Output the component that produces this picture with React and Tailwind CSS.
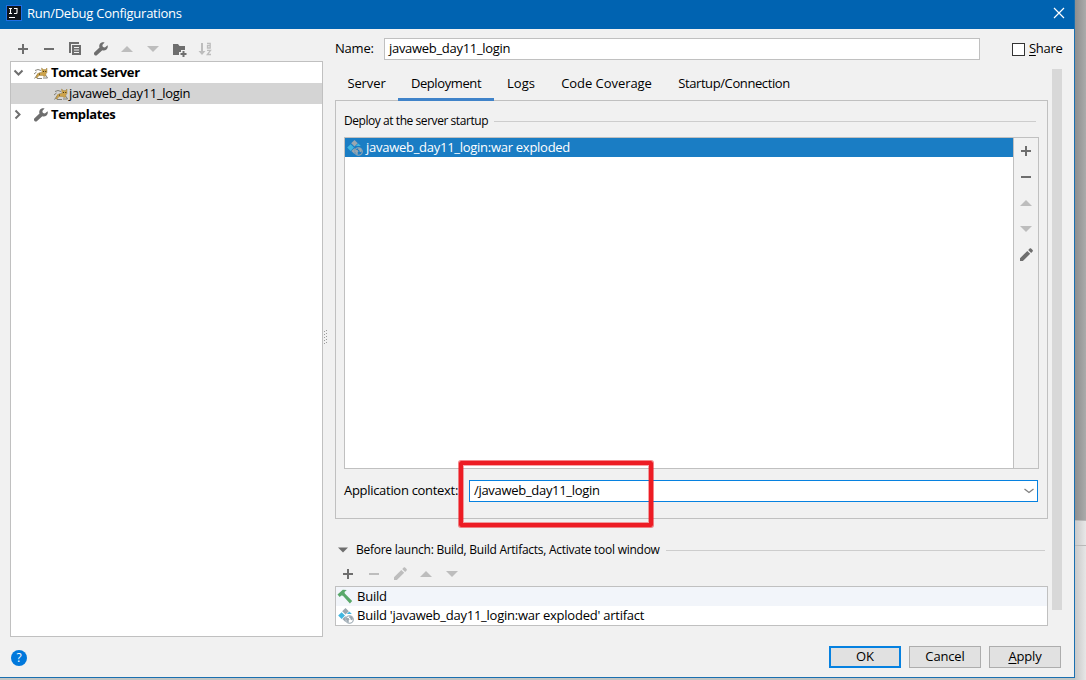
import clsx from 'clsx';

const PlusIcon = () => (
  <svg width="16" height="16" viewBox="0 0 16 16" className="shrink-0">
    <path d="M7 3h2v4h4v2H9v4H7V9H3V7h4z" fill="#6e6e6e" />
  </svg>
);

const MinusIcon = ({ color = '#6e6e6e' }) => (
  <svg width="16" height="16" viewBox="0 0 16 16" className="shrink-0">
    <path d="M3 7h10v2H3z" fill={color} />
  </svg>
);

const UpIcon = () => (
  <svg width="16" height="16" viewBox="0 0 16 16" className="shrink-0">
    <path d="M2 11l6-6 6 6z" fill="#bdbdbd" />
  </svg>
);

const DownIcon = () => (
  <svg width="16" height="16" viewBox="0 0 16 16" className="shrink-0">
    <path d="M2 5l6 6 6-6z" fill="#bdbdbd" />
  </svg>
);

const CopyIcon = () => (
  <svg width="16" height="16" viewBox="0 0 16 16" className="shrink-0">
    <path d="M2 1h10v2H4v9H2z" fill="#6e6e6e" />
    <path fillRule="evenodd" d="M5 4h9v10H5zM7 6v1h5V6zm0 2.500v1h5v-1zm0 2.500v1h5v-1z" fill="#6e6e6e" />
  </svg>
);

const WrenchIcon = () => (
  <svg width="16" height="16" viewBox="0 0 16 16" className="shrink-0">
    <path
      d="M14.600 4.300l-2.700 2.200-2-.5-.6-2 2.300-2.600c-1.900-.6-3.900.1-4.800 1.600-.7 1.200-.7 2.400-.3 3.500L1.500 11.300c-.7.7-.7 1.900 0 2.600.7.7 1.800.7 2.600 0l5.200-4.600c1.400.5 3 .2 4.200-.9 1.200-1.100 1.600-2.700 1.100-4.100z"
      fill="#6e6e6e"
    />
  </svg>
);

const FolderAddIcon = () => (
  <svg width="16" height="16" viewBox="0 0 16 16" className="shrink-0">
    <path d="M2 3h5l1.500 2H14v4h-4v2H8v3H2z" fill="#6e6e6e" />
    <path d="M11.500 10h2v2h2v2h-2v2h-2v-2h-2v-2h2z" fill="#6e6e6e" />
  </svg>
);

const SortIcon = () => (
  <svg width="16" height="16" viewBox="0 0 16 16" className="shrink-0">
    <path d="M4 2h2v8h2.500L5 14 1.500 10H4z" fill="#bdbdbd" />
    <path d="M10 2.500h3.200V7h-2.700V4.700h2.700M10 9.300h3.500L10.300 13.500H14" fill="none" stroke="#bdbdbd" strokeWidth="1.300" />
  </svg>
);

const PencilIcon = ({ color = '#6e6e6e' }) => (
  <svg width="16" height="16" viewBox="0 0 16 16" className="shrink-0">
    <path d="M2 11.200L9.300 3.900l2.900 2.900L4.900 14H2zM10.200 3l1.500-1.500c.4-.4 1-.4 1.400 0l1.500 1.500c.4.400.4 1 0 1.400l-1.500 1.500z" fill={color} />
  </svg>
);

const TomcatIcon = () => (
  <svg width="14" height="14" viewBox="0 0 14 14" className="shrink-0">
    <path d="M1 4.500l3-1 3 1M0 8l2.500-2M.5 12.500l3-4M3 12.500h5M12 9.500l1.500 2.500H9" fill="none" stroke="#77766c" strokeWidth=".9" />
    <path d="M7.500 2l2 1.500h2L13 2v4.500l-1.300 1.500L12 10l-2 .5-1.500-1L5 9.500 3 12H1.800l1.500-4.200L6 6.500h2z" fill="#cda34a" stroke="#8a713b" strokeWidth=".4" />
    <path d="M9 5h1v1H9zm2.200 0h1v1h-1zM5 7.500h.8v1.200H5z" fill="#3c3218" />
  </svg>
);

const ArtifactIcon = ({ selected }) => (
  <svg width="16" height="16" viewBox="0 0 16 16" className="shrink-0">
    <path d="M7.500 0l3.300 3.300-3.300 3.300-3.300-3.300z" fill="#9aa7b0" />
    <path d="M3.600 4.200L7 7.600 3.600 11 .2 7.600z" fill="#40b6e0" />
    <path d="M11.300 3.600l2.500 2.500h-5z" fill="#40b6e0" />
    <path d="M7.500 8.200l1 1L8 13.500l-.5.500-3.200-3z" fill="#9aa7b0" />
    <circle cx="11.500" cy="11.500" r="4.300" fill={selected ? '#1a7dc4' : '#fff'} />
    <circle cx="11.500" cy="11.500" r="3.800" fill="none" stroke="#9aa7b0" strokeWidth="1.100" />
    <path d="M8.300 9.500l2.200.5 1 1.500-1 1.200.6 2.100-1.700-.8-1.500-2.500zM11.500 8l2 .3 1.500 2.500-1 1.400-1.500-.7-.2-1.300-1.300-.8z" fill="#9aa7b0" />
  </svg>
);

const HammerIcon = () => (
  <svg width="16" height="16" viewBox="0 0 16 16" className="shrink-0">
    <path d="M.5 5.500L5.800.8l4 .2-2.300 2 .3 1.600 7.400 7.300-2.300 2.500-7-7.600-1.500-.3-1.700 1.600z" fill="#59a869" />
  </svg>
);

const tabs = [
  { name: 'Server', style: 'w-[63px] tracking-[-0.1px]' },
  { name: 'Deployment', style: 'w-[96px] tracking-[-0.4px]' },
  { name: 'Logs', style: 'w-[54px]' },
  { name: 'Code Coverage', style: 'w-[117px] tracking-[-0.05px]' },
  { name: 'Startup/Connection', style: 'w-[138px] tracking-[-0.4px]' },
];

const Button = ({ children, primary }) => (
  <button
    className={clsx(
      'flex h-[22px] w-[72px] items-center justify-center bg-[#e1e1e1] pb-[2px] leading-none tracking-[-0.15px]',
      primary ? 'border-2 border-[#0681e0]' : 'border border-[#adadad]'
    )}
  >
    {children}
  </button>
);

const TitleBar = () => (
  <header className="flex h-[29px] items-center bg-[#0063b1] pr-[9px] pl-[6px] text-white">
    <svg width="16" height="16" viewBox="0 0 16 16" className="-mt-[3px]">
      <rect x=".5" y=".5" width="15" height="15" fill="#101418" stroke="#1f6fe5" />
      <path d="M3 3.500h3M4.500 3.500v5M3 8.500h3M8 3.500h3v4q0 1-1 1H8M3 12.500h6" fill="none" stroke="#fff" strokeWidth="1.100" />
    </svg>
    <span className="-mt-px ml-[5px] tracking-[-0.26px]">Run/Debug Configurations</span>
    <svg width="12" height="12" viewBox="0 0 12 12" className="-mt-[3px] ml-auto">
      <path d="M1 1l10 10M11 1L1 11" stroke="#fff" strokeWidth="1.200" />
    </svg>
  </header>
);

const ConfigTree = () => (
  <aside className="w-[313px] pt-[9px]">
    <div className="flex h-[23px] items-center gap-[10px] pb-[2px] pl-[5px]">
      <PlusIcon />
      <MinusIcon />
      <CopyIcon />
      <WrenchIcon />
      <UpIcon />
      <DownIcon />
      <FolderAddIcon />
      <SortIcon />
    </div>
    <div className="h-[576px] border border-[#c0c0c0] bg-white leading-[21px]">
      <div className="flex h-[21px] items-center pl-[2px] font-bold tracking-[-0.38px]">
        <svg width="11" height="11" viewBox="0 0 11 11">
          <path d="M1.500 3.500l4 4 4-4" fill="none" stroke="#6e6e6e" strokeWidth="2" />
        </svg>
        <span className="ml-[10px]"><TomcatIcon /></span>
        <span className="ml-[3px]">Tomcat Server</span>
      </div>
      <div className="flex h-[21px] items-center bg-[#d4d4d4] pl-[43px] tracking-[-0.3px]">
        <TomcatIcon />
        <span className="ml-px">javaweb_day11_login</span>
      </div>
      <div className="flex h-[21px] items-center pl-[2px] font-bold tracking-[-0.38px]">
        <svg width="11" height="11" viewBox="0 0 11 11">
          <path d="M2.500 1.500l4 4-4 4" fill="none" stroke="#6e6e6e" strokeWidth="2" />
        </svg>
        <span className="ml-[9px]"><WrenchIcon /></span>
        <span className="ml-[2px]">Templates</span>
      </div>
    </div>
  </aside>
);

const DeploymentPanel = () => (
  <section className="-mt-px h-[419px] border border-[#c0c0c0] pr-[8px] pl-[8px]">
    <div className="flex h-[36px] items-center pt-[4px] text-[12px]">
      <span className="tracking-[-0.44px]">Deploy at the server startup</span>
      <span className="mr-[3px] ml-[6px] h-px flex-1 bg-[#cdcdcd]" />
    </div>
    <div className="flex h-[332px] border border-[#c0c0c0]">
      <div className="flex-1 bg-white">
        <div className="flex h-[19px] items-center bg-[#1a7dc4] pl-[2px] text-white">
          <ArtifactIcon selected />
          <span className="mt-px ml-[3px] tracking-[-0.27px]">javaweb_day11_login:war exploded</span>
        </div>
      </div>
      <div className="flex w-[25px] flex-col items-center gap-[10px] border-l border-[#c0c0c0] pt-[5px]">
        <PlusIcon />
        <MinusIcon />
        <UpIcon />
        <DownIcon />
        <PencilIcon />
      </div>
    </div>
    <div className="mt-[11px] flex h-[22px] items-center">
      <label className="w-[125px] shrink-0 tracking-[-0.3px] whitespace-nowrap">Application context:</label>
      <div className="relative mr-px flex h-[22px] flex-1 items-center border border-[#0681e0] bg-white pr-[3px] pl-[4px]">
        <span className="tracking-[-0.3px]">/javaweb_day11_login</span>
        <svg width="10" height="6" viewBox="0 0 10 6" className="ml-auto">
          <path d="M.5 1L5 4.500 9.500 1" fill="none" stroke="#808080" strokeWidth="1.300" />
        </svg>
        {/* highlight around the context path */}
        <div className="absolute -top-[20px] -left-[11px] h-[66px] w-[194px] rounded-[2px] border-[4px] border-[#ed1c24] shadow-[0_0_0_1px_#ed1c2488,inset_0_0_0_1px_#ed1c2466]" />
      </div>
    </div>
  </section>
);

const BeforeLaunch = () => (
  <section>
    <div className="mt-[21px] flex h-[20px] items-center pl-[3px] text-[12px]">
      <svg width="10" height="6" viewBox="0 0 10 6">
        <path d="M0 .5h10L5 5.500z" fill="#6e6e6e" />
      </svg>
      <span className="ml-[8px] tracking-[-0.26px] whitespace-nowrap">Before launch: Build, Build Artifacts, Activate tool window</span>
      <span className="mr-[3px] ml-[6px] h-px flex-1 bg-[#cdcdcd]" />
    </div>
    <div className="flex h-[26px] items-center gap-[10px] pt-[2px] pl-[5px]">
      <PlusIcon />
      <MinusIcon color="#bdbdbd" />
      <PencilIcon color="#bdbdbd" />
      <UpIcon />
      <DownIcon />
    </div>
    <div className="h-[40px] border border-[#c0c0c0] bg-white tracking-[-0.24px]">
      <div className="flex h-[19px] items-center bg-[#f2f5fa] pl-px">
        <HammerIcon />
        <span className="ml-[4px]">Build</span>
      </div>
      <div className="flex h-[19px] items-center pl-[2px]">
        <ArtifactIcon />
        <span className="ml-[3px]">Build 'javaweb_day11_login:war exploded' artifact</span>
      </div>
    </div>
  </section>
);

const App = () => {
  return (
    <div className="flex h-[680px] w-[1086px] overflow-hidden bg-[#c3c6c4] font-['Open_Sans','Noto_Sans',sans-serif] text-[13px] text-black">
      <div className="flex h-[678px] w-[1075px] shrink-0 flex-col border-r border-b border-[#1a6fb0] bg-[#f1f1f1]">
        <TitleBar />
        <main className="flex pl-[10px]">
          <ConfigTree />
          <div className="flex w-[12px] items-center pt-[7px]">
            <svg width="6" height="16" viewBox="0 0 6 16">
              <path d="M1.500 2v14M3.500 1v14" stroke="#9a9a9a" strokeWidth="1" strokeDasharray="1 2" />
            </svg>
          </div>
          <div className="w-[727px] pt-[9px]">
            <div className="flex h-[22px] items-center">
              <label className="w-[49px] shrink-0 tracking-[-0.2px]">Name:</label>
              <div className="flex h-[22px] w-[596px] shrink-0 items-center border border-[#c0c0c0] bg-white pl-[4px] tracking-[-0.3px]">
                javaweb_day11_login
              </div>
              <span className="ml-[32px] h-[13px] w-[13px] shrink-0 border border-[#333] bg-white" />
              <span className="ml-[4px] shrink-0 tracking-[-0.3px]"><u className="underline-offset-2">S</u>hare</span>
            </div>
            <div className="mt-[9px] flex h-[557px]">
              <div className="w-[713px]">
                <nav className="relative z-10 flex h-[32px]">
                  {tabs.map((tab) => (
                    <div
                      key={tab.name}
                      className={clsx(
                        'flex justify-center border-b-3 pt-[5px] whitespace-nowrap',
                        tab.style,
                        tab.name === 'Deployment' ? 'border-[#4083c9]' : 'border-transparent'
                      )}
                    >
                      {tab.name}
                    </div>
                  ))}
                </nav>
                <DeploymentPanel />
                <BeforeLaunch />
              </div>
              <div className="ml-[4px] h-[541px] w-[10px] bg-[#d8d8d8]" />
            </div>
          </div>
        </main>
        <footer className="flex h-[40px] items-center pr-[13px] pl-[11px]">
          <span className="mt-[2px] flex h-4 w-4 items-center justify-center rounded-full bg-[#0078dc] text-[12px] leading-none text-white">?</span>
          <div className="ml-auto flex gap-2">
            <Button primary>OK</Button>
            <Button>Cancel</Button>
            <Button><span><u className="underline-offset-2">A</u>pply</span></Button>
          </div>
        </footer>
      </div>
      {/* window behind the dialog */}
      <div className="flex w-[11px] flex-col">
        <div className="h-[521px] border-b border-[#b9b9b9] bg-linear-to-r from-[#8e8e8e] to-[#ababab]" />
        <div className="h-[25px] border-b border-[#b9b9b9] bg-linear-to-r from-[#c9c9c9] to-[#e8e8e8]" />
        <div className="flex-1 bg-linear-to-r from-[#c9c9c9] to-[#e6e6e6]" />
      </div>
    </div>
  );
};

export default App;
